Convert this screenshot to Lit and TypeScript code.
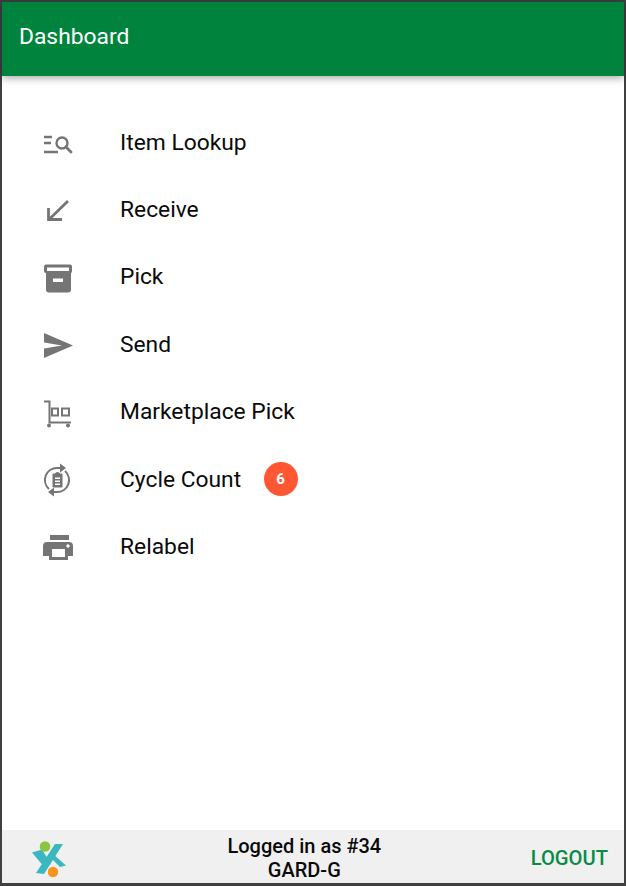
import { LitElement, html, css, svg } from 'lit';
import { customElement } from 'lit/decorators.js';

const menu = [
  {
    label: 'Item Lookup',
    icon: svg`<g fill="none" stroke="currentColor" stroke-width="2.400"><path d="M2 11h8M2 17h7M2 26h14"/><circle cx="20" cy="17" r="5.500"/><path d="M24 21l5 5" stroke-width="2.800" stroke-linecap="round"/></g>`
  },
  {
    label: 'Receive',
    icon: svg`<path fill="none" stroke="currentColor" stroke-width="2.800" d="M26 7L7 25.500M6.500 14v11.500H20"/>`
  },
  {
    label: 'Pick',
    icon: svg`<path fill="currentColor" fill-rule="evenodd" d="M4 3.500h24q2 0 2 2v5q0 1-1 1.500v16.500q0 3-3 3H7q-3 0-3-3V12q-2-.5-2-1.500v-5q0-2 2-2zM5 6.500V10h22V6.500zM11 17.500V21h10v-3.500z"/>`
  },
  {
    label: 'Send',
    icon: svg`<path fill="currentColor" d="M2 5l29 12.500L2 30v-9.500l18-3-18-3z"/>`
  },
  {
    label: 'Marketplace Pick',
    icon: svg`<g fill="none" stroke="currentColor" stroke-width="2"><path d="M2 5.500h5.500v21H29"/><path d="M10 12.500h6v7h-6zM20 12.500h7v7h-7z"/></g><circle cx="7" cy="29.500" r="2" fill="currentColor"/><circle cx="26" cy="29.500" r="2" fill="currentColor"/>`
  },
  {
    label: 'Cycle Count',
    badge: 6,
    icon: svg`<g fill="none" stroke="currentColor" stroke-width="2"><path d="M7 26A12 12 0 0 1 15 5h3"/><path d="M23 8A12 12 0 0 1 15 29h-3"/></g><path fill="currentColor" d="M18 .5l6 4.500-6 4.500zM12 24.500L6 29l6 4.500z"/><path fill="currentColor" fill-rule="evenodd" d="M11.500 10.500h1.500q.5-1.500 2.500-1.500t2.500 1.500h1.500q1 0 1 1v12q0 1-1 1h-8q-1 0-1-1v-12q0-1 1-1zm1.500 4V16h5v-1.500zm0 3V19h5v-1.500zm0 3V22h5v-1.500z"/>`
  },
  {
    label: 'Relabel',
    icon: svg`<path fill="currentColor" fill-rule="evenodd" d="M8 4h19v5H8zM5 11h22q4 0 4 4v10h-5v4H7v-4H1V15q0-4 4-4zm5 7v8h13v-8zm16-4.700a1.700 1.700 0 1 0 .01 0z"/>`
  }
];

@customElement('app-root')
export class AppRoot extends LitElement {
  static styles = css`
    :host {
      display: block;
      height: 886px;
      box-sizing: border-box;
      border: 2px solid #404040;
      border-bottom-width: 3px;
      font-family: Roboto, "Liberation Sans", sans-serif;
      color: #0a0a0a;
      background: #fff;
    }
    .page {
      height: 100%;
      display: flex;
      flex-direction: column;
    }
    .header {
      flex: none;
      height: 68px;
      padding: 0 0 6px 17px;
      display: flex;
      align-items: center;
      background: #00843d;
      color: #fff;
      font-size: 22.8px;
      box-shadow: 0 2px 8px rgba(0, 0, 0, 0.35);
    }
    .menu {
      flex: 1;
      padding-top: 32.5px;
    }
    .row {
      height: 67.4px;
      display: flex;
      align-items: center;
      font-size: 22.8px;
    }
    .icon {
      flex: none;
      width: 32px;
      height: 32px;
      margin: 0 46px 0 40px;
      color: #757575;
    }
    .badge {
      width: 34px;
      height: 34px;
      margin-left: 22.5px;
      border-radius: 50%;
      display: flex;
      align-items: center;
      justify-content: center;
      background: #ff5733;
      color: #fff;
      font-size: 15px;
      font-weight: 700;
    }
    .footer {
      flex: none;
      height: 53px;
      display: flex;
      align-items: center;
      justify-content: space-between;
      background: #f0f0f0;
    }
    .logo {
      width: 36px;
      height: 40px;
      margin-left: 29px;
    }
    .user {
      flex: 1;
      padding: 2px 0 0 11px;
      text-align: center;
      font-size: 20px;
      font-weight: 500;
      line-height: 24px;
    }
    .logout {
      margin: 2px 16px 0 0;
      color: #0b8a47;
      font-size: 20.2px;
      font-weight: 500;
    }
  `;

  render() {
    return html`<div class="page">
      <div class="header">Dashboard</div>
      <div class="menu">
        ${menu.map(item => html`<div class="row">
          <svg class="icon" viewBox="0 0 32 32" overflow="visible">${item.icon}</svg>
          <span>${item.label}</span>
          ${item.badge ? html`<span class="badge">${item.badge}</span>` : ''}
        </div>`)}
      </div>
      <div class="footer">
        <svg class="logo" viewBox="0 0 36 40">
          <path fill="#3ab7bf" d="M24 7h8L13 37l-8-1zM1 15.500l10-3L20 27l-6 4zM22 17l13 11.500-6 1.500-9-9z"/>
          <circle cx="14" cy="9.500" r="5.300" fill="#8cc63f"/>
          <circle cx="22" cy="35" r="5.200" fill="#f7941d"/>
        </svg>
        <div class="user">Logged in as #34<br />GARD-G</div>
        <div class="logout">LOGOUT</div>
      </div>
    </div>`;
  }
}
